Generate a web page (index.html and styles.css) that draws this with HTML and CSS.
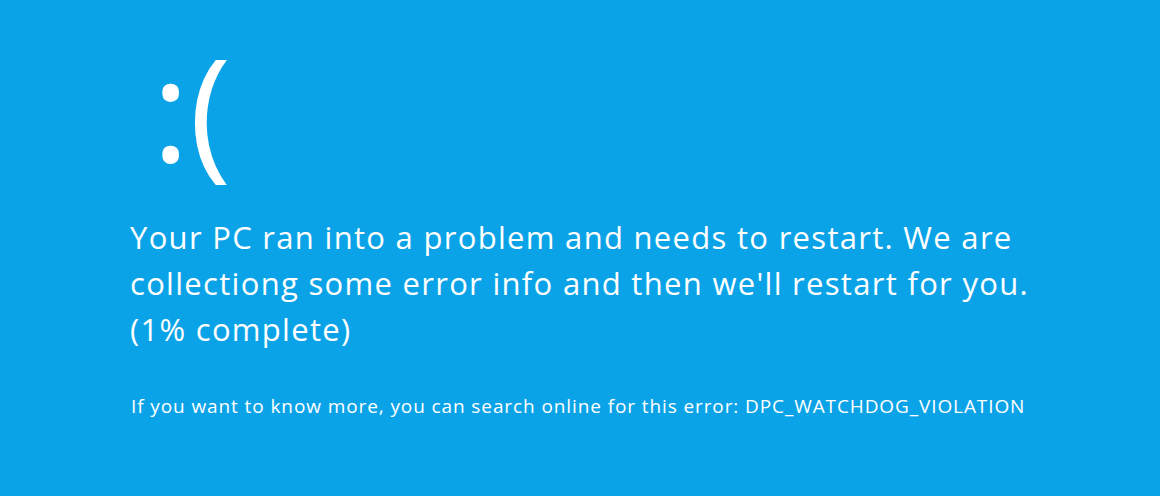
FILE: index.html
```html
<!DOCTYPE html>
<html>
<head>
  <title>Blue Screen</title>
  <link rel="stylesheet" href="styles.css">
</head>
<body>
  <div class="screen">
    <div class="face">:(</div>
    <p class="message">Your PC ran into a problem and needs to restart. We are<br>
      collectiong some error info and then we'll restart for you.<br>
      (1% complete)</p>
    <p class="info">If you want to know more, you can search online for this error: DPC_WATCHDOG_VIOLATION</p>
  </div>
</body>
</html>
```

FILE: styles.css
```css
body {
  margin: 0;
  background-color: #0ba3e8;
  color: white;
  font-family: 'Open Sans', sans-serif;
}

.screen {
  height: 496px;
  padding: 36px 0 0 130px;
  box-sizing: border-box;
}

.face {
  font-size: 142px;
  line-height: 142px;
  margin-left: 22px;
}

.message {
  font-size: 31px;
  line-height: 46px;
  letter-spacing: 1.3px;
  margin: 36px 0 0 0;
}

.info {
  font-size: 19px;
  letter-spacing: 0.9px;
  margin: 41px 0 0 1px;
}
```
